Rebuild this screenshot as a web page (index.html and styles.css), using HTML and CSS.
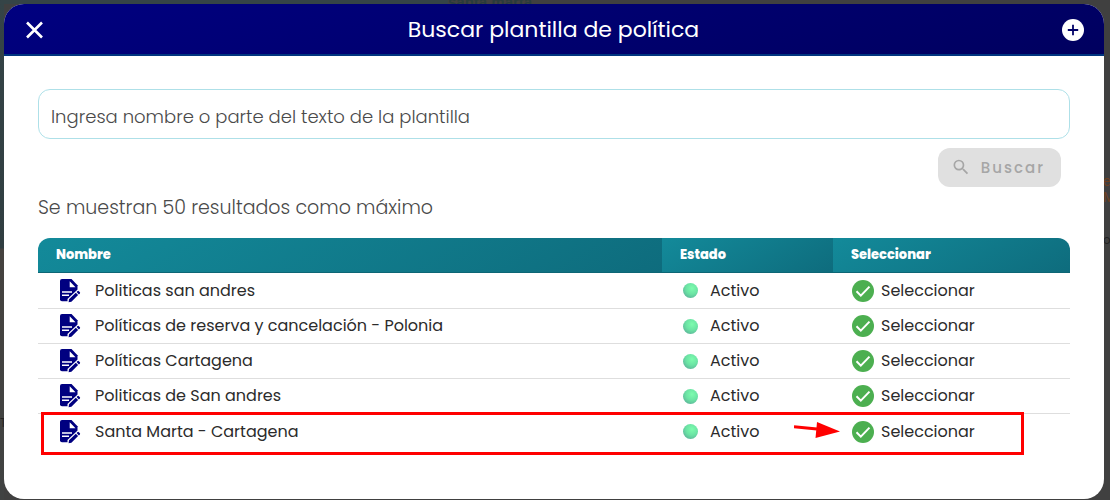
FILE: index.html
```html
<!DOCTYPE html>
<html lang="es">
<head>
    <meta charset="UTF-8">
    <meta name="viewport" content="width=device-width, initial-scale=1.0">
    <title>Buscar plantilla de política</title>
    <link rel="stylesheet" href="styles.css">
</head>
<body>
    <svg class="sprite" aria-hidden="true">
        <symbol id="icon-edit" viewBox="0 0 21 24">
            <path fill="#000080" d="M2 0h9.500L17.500 6.200V12L9 22.300H2Q0 22.300 0 20.300V2Q0 0 2 0z"/>
            <path fill="#fff" d="M9.700 2.200V8.200H15.500zM2 12.200h10v1.500H2zM2 15.600h7v1.500H2zM17.600 10.500L7.500 20V24H14L21 16z"/>
            <path fill="#000080" d="M8.600 23.300l.4-3 6.800-6.600 2.300 2.400-6.700 6.600zM16.600 13l1-.9q.7-.5 1.300.1l1 1q.6.700 0 1.300l-1 .9z"/>
        </symbol>
        <symbol id="icon-check" viewBox="0 0 22 22">
            <circle cx="11" cy="11" r="11" fill="#4caf50"/>
            <path d="M4.500 11.300l4.300 4.300 8.700-9" fill="none" stroke="#fff" stroke-width="2"/>
        </symbol>
    </svg>

    <!-- Página de fondo, oscurecida -->
    <div class="backdrop" aria-hidden="true">
        <span class="ghost ghost-title">santa marta</span>
        <span class="ghost ghost-price">e<br>M</span>
        <span class="ghost ghost-right">or</span>
        <span class="ghost ghost-left">T</span>
    </div>

    <div class="modal" role="dialog" aria-labelledby="modal-title">
        <header class="modal-header">
            <button class="icon-button" type="button" aria-label="Cerrar">
                <svg width="24" height="24" viewBox="0 0 24 24"><path d="M5 5.500l15 15M20 5.500l-15 15" stroke="#fff" stroke-width="2.600"/></svg>
            </button>
            <h1 id="modal-title">Buscar plantilla de política</h1>
            <button class="icon-button" type="button" aria-label="Agregar">
                <svg width="24" height="24" viewBox="0 0 24 24"><circle cx="12" cy="13" r="11" fill="#fff"/><path d="M12 7.800v10.400M6.800 13h10.400" stroke="#000068" stroke-width="1.800"/></svg>
            </button>
        </header>

        <main class="modal-body">
            <form class="search">
                <input class="search-input" type="text" aria-label="Ingresa nombre o parte del texto de la plantilla" placeholder="Ingresa nombre o parte del texto de la plantilla">
                <button class="search-button" type="submit" disabled>
                    <svg width="20" height="20" viewBox="0 0 24 24"><path fill="currentColor" d="M15.500 13h-.79l-.28-.27A6.471 6.471 0 0 0 16 8.500 6.500 6.500 0 1 0 9.500 15c1.610 0 3.090-.59 4.230-1.570l.27.28v.79l5 4.990L20.490 18l-4.990-5zm-6 0C7.010 13 5 10.990 5 8.500S7.010 4 9.500 4 14 6.010 14 8.500 11.990 13 9.500 13z"/></svg>
                    Buscar
                </button>
            </form>

            <p class="hint">Se muestran 50 resultados como máximo</p>

            <table class="results">
                <colgroup>
                    <col>
                    <col class="col-estado">
                    <col class="col-seleccionar">
                </colgroup>
                <thead>
                    <tr><th>Nombre</th><th>Estado</th><th>Seleccionar</th></tr>
                </thead>
                <tbody>
                    <tr>
                        <td><div class="cell"><svg class="edit"><use href="#icon-edit"/></svg>Politicas san andres</div></td>
                        <td><div class="cell"><span class="dot"></span>Activo</div></td>
                        <td><button class="select" type="button"><svg class="check"><use href="#icon-check"/></svg>Seleccionar</button></td>
                    </tr>
                    <tr>
                        <td><div class="cell"><svg class="edit"><use href="#icon-edit"/></svg>Políticas de reserva y cancelación - Polonia</div></td>
                        <td><div class="cell"><span class="dot"></span>Activo</div></td>
                        <td><button class="select" type="button"><svg class="check"><use href="#icon-check"/></svg>Seleccionar</button></td>
                    </tr>
                    <tr>
                        <td><div class="cell"><svg class="edit"><use href="#icon-edit"/></svg>Políticas Cartagena</div></td>
                        <td><div class="cell"><span class="dot"></span>Activo</div></td>
                        <td><button class="select" type="button"><svg class="check"><use href="#icon-check"/></svg>Seleccionar</button></td>
                    </tr>
                    <tr>
                        <td><div class="cell"><svg class="edit"><use href="#icon-edit"/></svg>Politicas de San andres</div></td>
                        <td><div class="cell"><span class="dot"></span>Activo</div></td>
                        <td><button class="select" type="button"><svg class="check"><use href="#icon-check"/></svg>Seleccionar</button></td>
                    </tr>
                    <tr class="marked">
                        <td><div class="cell"><svg class="edit"><use href="#icon-edit"/></svg>Santa Marta - Cartagena</div></td>
                        <td><div class="cell"><span class="dot"></span>Activo</div></td>
                        <td>
                            <button class="select" type="button"><svg class="check"><use href="#icon-check"/></svg>Seleccionar</button>
                            <svg class="arrow" width="46" height="18" viewBox="0 0 46 18" aria-hidden="true"><path d="M0 5.800L23 8" stroke="#f00" stroke-width="3"/><path d="M23 1l23 9.500L21.500 17z" fill="#f00"/></svg>
                        </td>
                    </tr>
                </tbody>
            </table>
        </main>
    </div>
</body>
</html>
```

FILE: styles.css
```css
* {
    box-sizing: border-box;
}
body {
    margin: 0;
    padding: 4px 6px 1px 4px;
    min-height: 100vh;
    display: flex;
    background-color: #404040;
    font-family: Poppins, Inter, sans-serif;
    font-size: 16px;
    color: #2b2b2b;
}
button {
    font-family: inherit;
}
.sprite {
    position: absolute;
    width: 0;
    height: 0;
}

/* Fondo */
.backdrop {
    position: absolute;
    inset: 0;
    overflow: hidden;
    background: linear-gradient(#354447 0, #303e41 248px, #45423f 249px, #404242 100%) left / 4px 100% no-repeat,
        linear-gradient(#354447, #354447) left top / 448px 4px no-repeat;
}
.ghost {
    position: absolute;
    line-height: 16px;
}
.ghost-title {
    top: -6px;
    left: 448px;
    font-family: "Liberation Sans", sans-serif;
    font-size: 15px;
    font-weight: 700;
    color: #293c3c;
}
.ghost-price {
    top: 173px;
    left: 1103px;
    font-family: "Liberation Sans", sans-serif;
    font-size: 14px;
    color: #70401f;
}
.ghost-right {
    top: 232px;
    left: 1103px;
    font-size: 12px;
    color: #222;
}
.ghost-left {
    top: 415px;
    left: 0;
    font-size: 12px;
    color: #222;
}

/* Modal */
.modal {
    position: relative;
    flex: 1;
    background-color: #fff;
    border-radius: 20px;
    overflow: hidden;
}
.modal-header {
    display: flex;
    align-items: center;
    justify-content: space-between;
    height: 52px;
    padding: 0 19px 0 18px;
    background: linear-gradient(165deg, #000080, #00005f);
    border-bottom: 2px solid #003580;
}
.modal-header h1 {
    margin: 0;
    font-size: 22px;
    font-weight: 400;
    color: #fff;
}
.icon-button {
    display: flex;
    padding: 0;
    border: none;
    background: none;
    cursor: pointer;
}
.modal-body {
    padding: 33px 34px;
}

/* Buscador */
.search {
    display: flex;
    flex-direction: column;
    gap: 9px;
}
.search-input {
    height: 50px;
    padding: 5px 12px 0;
    border: 1px solid #aee0e8;
    border-radius: 12px;
    font-family: inherit;
    font-size: 18px;
    font-weight: 300;
}
.search-input::placeholder {
    color: #4a4a4a;
}
.search-button {
    display: flex;
    align-items: center;
    align-self: flex-end;
    gap: 10px;
    height: 39px;
    margin-right: 9px;
    padding: 0 16px 0 13px;
    border: none;
    border-radius: 12px;
    background-color: #e0e0e0;
    color: #a6a6a6;
    font-size: 15px;
    font-weight: 500;
    letter-spacing: 2px;
}
.hint {
    margin: 9px 0 18px;
    font-size: 19px;
    font-weight: 300;
    line-height: 24px;
    color: #4a4a4a;
}

/* Resultados */
.results {
    width: 100%;
    table-layout: fixed;
    border-collapse: separate;
    border-spacing: 0;
}
.col-estado {
    width: 171px;
}
.col-seleccionar {
    width: 237px;
}
.results th {
    height: 35px;
    padding: 0 18px 1px;
    background: linear-gradient(150deg, #138a9a, #0e6c7d);
    border-bottom: 1px solid #0d6675;
    color: #fff;
    font-size: 13px;
    font-weight: 800;
    text-align: left;
}
.results th:first-child {
    border-top-left-radius: 12px;
}
.results th:last-child {
    border-top-right-radius: 12px;
}
.results td {
    height: 35px;
    padding: 0 18px;
    border-bottom: 1px solid #dedede;
}
.results tbody tr:first-child td {
    height: 36px;
}
.results tr:last-child td {
    border-bottom: none;
}
.cell,
.select {
    display: flex;
    align-items: center;
    line-height: 24px;
}
.select {
    gap: 7px;
    padding: 0;
    border: none;
    background: none;
    color: inherit;
    font-size: 16px;
    cursor: pointer;
}
.edit {
    width: 21px;
    height: 24px;
    margin: 0 14px 0 4px;
}
.check {
    width: 22px;
    height: 22px;
}
.select .check {
    margin-left: 1px;
}
.dot {
    width: 15px;
    height: 15px;
    margin: 0 12px 0 3px;
    border-radius: 50%;
    background: radial-gradient(circle at 60% 35%, #7dfcae 0, #6be3a4 45%, #549c93 100%);
}

/* Fila señalada */
.marked {
    position: relative;
}
.marked td:first-child::after {
    content: "";
    position: absolute;
    inset: -2px 46px -6px 3px;
    border: 3px solid #f00;
}
.marked td:last-child {
    position: relative;
}
.arrow {
    position: absolute;
    top: 7px;
    left: -39px;
}
```
